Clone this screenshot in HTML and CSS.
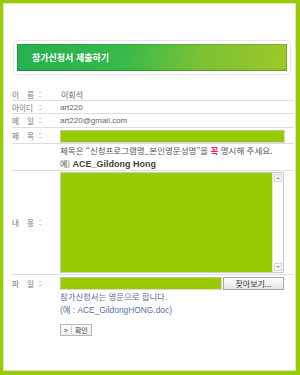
FILE: index.html
```html
<!DOCTYPE html>
<html lang="ko">

<head>
    <meta charset="UTF-8">
    <meta name="viewport" content="width=device-width, initial-scale=1.0">
    <title>참가신청서 제출하기</title>
    <link rel="stylesheet" href="styles.css">
</head>

<body>
    <div class="frame">
        <div class="title-box">
            <div class="title-bar">참가신청서 제출하기</div>
        </div>

        <div class="form">
            <div class="row row-name">
                <span class="label"><span class="lt">이 름</span><span class="colon">:</span></span>
                <span class="value">이회석</span>
            </div>
            <div class="row row-id">
                <span class="label"><span class="lt">아이디</span><span class="colon">:</span></span>
                <span class="value latin">art220</span>
            </div>
            <div class="row row-mail">
                <span class="label"><span class="lt">메 일</span><span class="colon">:</span></span>
                <span class="value latin">art220@gmail.com</span>
            </div>
            <div class="row row-subject">
                <span class="label"><span class="lt">제 목</span><span class="colon">:</span></span>
                <span class="field subject-input"></span>
            </div>
            <div class="row row-hint">
                <div class="hint">
                    <p>제목은 “신청프로그램명_본인영문성명”을 <b class="must">꼭</b> 명시해 주세요.</p>
                    <p class="example"><span class="ex-pre">예)</span> ACE_Gildong Hong</p>
                </div>
            </div>
            <div class="row row-content">
                <span class="label"><span class="lt">내 용</span><span class="colon">:</span></span>
                <div class="textarea">
                    <div class="ta-fill"></div>
                    <div class="ta-scroll">
                        <span class="sb-btn sb-up"></span>
                        <span class="sb-btn sb-down"></span>
                    </div>
                </div>
            </div>
            <div class="row row-file">
                <span class="label"><span class="lt">파 일</span><span class="colon">:</span></span>
                <div class="file-col">
                    <div class="file-line">
                        <span class="field file-input"></span>
                        <span class="browse">찾아보기...</span>
                    </div>
                    <p class="note">참가신청서는 영문으로 합니다.</p>
                    <p class="note">(예 : ACE_GildongHONG.doc)</p>
                    <span class="ok-btn"><span class="arr">&gt;</span><span class="ok-txt">확인</span></span>
                </div>
            </div>
        </div>
    </div>
</body>

</html>
```

FILE: styles.css
```css
* {
    margin: 0;
    padding: 0;
    box-sizing: border-box;
}

body {
    font-family: "Liberation Sans", "Noto Sans CJK KR", sans-serif;
    font-size: 8px;
    color: #666;
    background: #fff;
}

.frame {
    width: 300px;
    height: 375px;
    border-style: solid;
    border-color: #99cc00;
    border-width: 3px 4px 4px 3px;
    box-shadow: inset 0 0 0 1px #dde8c4;
    padding-top: 37px;
}

/* title */
.title-box {
    width: 278px;
    height: 35px;
    margin-left: 10px;
    padding: 3px;
    border: 1px solid #e4e4e4;
    border-radius: 5px;
}

.title-bar {
    height: 27px;
    line-height: 27px;
    padding-left: 15px;
    color: #fff;
    font-family: "Noto Sans CJK KR", sans-serif;
    font-size: 9px;
    font-weight: bold;
    background: linear-gradient(100deg, #27b04f 0%, #38b94a 40%, #7cc134 68%, #9ec829 100%);
    box-shadow: inset 0 0 0 1px rgba(0, 80, 0, 0.15), inset 0 -1px 2px rgba(0, 60, 0, 0.2);
}

/* form */
.form {
    margin: 13px 0 0 9px;
    width: 282px;
}

.row {
    display: flex;
    align-items: center;
    border-bottom: 1px solid #dedede;
}

.row-name,
.row-id {
    height: 13px;
}

.row-mail {
    height: 14px;
}

.row-subject {
    height: 16px;
}

.label {
    width: 48px;
    flex: none;
    font-family: "Noto Sans CJK KR", sans-serif;
    font-size: 7.6px;
    color: #777;
    display: flex;
    align-items: center;
}

.lt {
    display: inline-block;
    width: 22px;
    text-align: justify;
    text-align-last: justify;
}

.colon {
    margin-left: 5px;
}

.value {
    color: #666;
    font-family: "Noto Sans CJK KR", sans-serif;
    font-size: 8px;
    padding-left: 1px;
}

.value.latin {
    font-family: "Liberation Sans", sans-serif;
    font-size: 8px;
    padding-left: 0;
}

.field {
    display: block;
    background: #99cc00;
    border: 1px solid #b9c99a;
    border-right-color: #d6d6d6;
    border-bottom-color: #d6d6d6;
}

.subject-input {
    width: 225px;
    height: 13px;
    margin-top: 1px;
}

/* hint */
.row-hint {
    height: 27px;
    padding-left: 48px;
}

.hint p {
    line-height: 13px;
    font-family: "Noto Sans CJK KR", sans-serif;
    font-size: 8.5px;
    color: #555;
}

.must {
    color: #e8246f;
}

.hint .example {
    font-family: "Liberation Sans", "Noto Sans CJK KR", sans-serif;
    font-size: 9px;
    font-weight: bold;
    color: #444;
}

.hint .ex-pre {
    font-family: "Noto Sans CJK KR", sans-serif;
    font-size: 8px;
    font-weight: normal;
    color: #555;
}

/* content */
.row-content {
    height: 104px;
}

.textarea {
    display: flex;
    width: 224px;
    height: 101px;
    border: 1px solid #c8c8c8;
}

.ta-fill {
    flex: 1;
    background: #99cc00;
}

.ta-scroll {
    width: 11px;
    background: #fff;
    border-left: 1px solid #e2e2e2;
    display: flex;
    flex-direction: column;
    justify-content: space-between;
    padding: 1px;
}

.sb-btn {
    display: block;
    width: 8px;
    height: 8px;
    border: 1px solid #d4d4d4;
    background: #f6f6f6;
    position: relative;
}

.sb-btn::after {
    content: "";
    position: absolute;
    left: 1px;
    border-left: 2px solid transparent;
    border-right: 2px solid transparent;
}

.sb-up::after {
    top: 2px;
    border-bottom: 2px solid #999;
}

.sb-down::after {
    top: 2px;
    border-top: 2px solid #999;
}

/* file */
.row-file {
    align-items: flex-start;
    border-bottom: none;
    padding-top: 2px;
}

.row-file .label {
    height: 13px;
}

.file-line {
    display: flex;
    gap: 1px;
    height: 13px;
}

.file-input {
    width: 162px;
    height: 13px;
}

.browse {
    width: 61px;
    height: 13px;
    line-height: 11px;
    text-align: center;
    font-family: "Noto Sans CJK KR", sans-serif;
    font-size: 8px;
    color: #333;
    border: 1px solid #a9a9a9;
    background: linear-gradient(#fbfbfb, #e6e6e6);
}

.note {
    line-height: 13px;
    font-family: "Liberation Sans", "Noto Sans CJK KR", sans-serif;
    font-size: 8.4px;
    color: #4f74a8;
}

.note:first-of-type {
    margin-top: 1px;
}

.ok-btn {
    display: inline-flex;
    align-items: center;
    margin-top: 7px;
    height: 12px;
    padding: 0 3px;
    border: 1px solid #b8b8b8;
    background: linear-gradient(#fdfdfd, #ececec);
    font-family: "Noto Sans CJK KR", sans-serif;
    font-size: 7px;
    color: #444;
}

.arr {
    padding-right: 3px;
    border-right: 1px solid #ccc;
    line-height: 8px;
}

.ok-txt {
    padding-left: 3px;
}
```
